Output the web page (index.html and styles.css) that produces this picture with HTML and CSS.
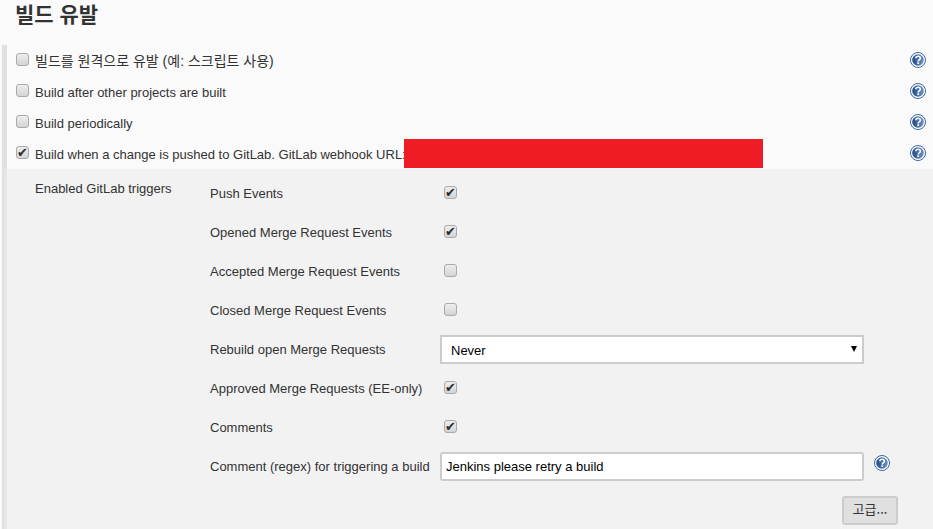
FILE: index.html
```html
<!DOCTYPE html>
<html lang="ko">
<head>
    <meta charset="UTF-8">
    <meta name="viewport" content="width=device-width, initial-scale=1.0">
    <title>빌드 유발</title>
    <link rel="stylesheet" href="styles.css">
</head>
<body>
    <svg class="defs" width="0" height="0" aria-hidden="true">
        <defs>
            <linearGradient id="help-fill" x1="0" y1="0" x2="1" y2="0">
                <stop offset="0" stop-color="#204a87"/>
                <stop offset="1" stop-color="#6f93c4"/>
            </linearGradient>
            <symbol id="help" viewBox="0 0 16 16">
                <circle cx="8" cy="8" r="7.5" fill="none" stroke="#3465a4" stroke-width="1"/>
                <circle cx="8" cy="8" r="6.6" fill="#fff"/>
                <circle cx="8" cy="8" r="5.8" fill="url(#help-fill)"/>
                <path d="M5.9 6.2c0-2.7 4.4-2.7 4.4 0 0 1.6-2.1 1.7-2.1 3.2" fill="none" stroke="#fff" stroke-width="1.6"/>
                <rect x="7.3" y="10.3" width="1.8" height="1.7" fill="#fff"/>
            </symbol>
        </defs>
    </svg>

    <h2 class="section-title">빌드 유발</h2>

    <div class="section">
        <div class="row">
            <label class="check check-ko"><input type="checkbox">빌드를 원격으로 유발 (예: 스크립트 사용)</label>
            <svg class="help"><use href="#help"/></svg>
        </div>
        <div class="row">
            <label class="check"><input type="checkbox">Build after other projects are built</label>
            <svg class="help"><use href="#help"/></svg>
        </div>
        <div class="row">
            <label class="check"><input type="checkbox">Build periodically</label>
            <svg class="help"><use href="#help"/></svg>
        </div>
        <div class="row">
            <label class="check"><input type="checkbox" checked>Build when a change is pushed to GitLab. GitLab webhook URL:</label>
            <div class="redacted"></div>
            <svg class="help"><use href="#help"/></svg>
        </div>

        <div class="panel">
            <div class="panel-title">Enabled GitLab triggers</div>
            <div class="triggers">
                <div class="trigger">
                    <div class="trigger-label">Push Events</div>
                    <input type="checkbox" checked>
                </div>
                <div class="trigger">
                    <div class="trigger-label">Opened Merge Request Events</div>
                    <input type="checkbox" checked>
                </div>
                <div class="trigger">
                    <div class="trigger-label">Accepted Merge Request Events</div>
                    <input type="checkbox">
                </div>
                <div class="trigger">
                    <div class="trigger-label">Closed Merge Request Events</div>
                    <input type="checkbox">
                </div>
                <div class="trigger">
                    <div class="trigger-label">Rebuild open Merge Requests</div>
                    <div class="select">Never<span class="arrow"></span></div>
                </div>
                <div class="trigger">
                    <div class="trigger-label">Approved Merge Requests (EE-only)</div>
                    <input type="checkbox" checked>
                </div>
                <div class="trigger">
                    <div class="trigger-label">Comments</div>
                    <input type="checkbox" checked>
                </div>
                <div class="trigger">
                    <div class="trigger-label">Comment (regex) for triggering a build</div>
                    <input class="text-input" type="text" value="Jenkins please retry a build">
                    <svg class="help help-inline"><use href="#help"/></svg>
                </div>
                <div class="actions">
                    <button class="advanced">고급...</button>
                </div>
            </div>
        </div>
    </div>
</body>
</html>
```

FILE: styles.css
```css
html, body {
    height: 100%;
}

body {
    margin: 0;
    overflow: hidden;
    background-color: #fafafa;
    color: #333;
    font-family: "Liberation Sans", "Noto Sans CJK KR", sans-serif;
    font-size: 13px;
}

.defs {
    position: absolute;
}

.section-title {
    margin: 0;
    padding-left: 15px;
    height: 45px;
    line-height: 30px;
    font-size: 21px;
    font-weight: bold;
}

.section {
    margin-left: 2px;
    border-left: 5px solid #e0e0e0;
    height: 484px;
}

.row {
    display: flex;
    align-items: center;
    height: 30px;
    margin-bottom: 1px;
    padding: 0 7px 0 9px;
}

.check {
    display: flex;
    align-items: center;
    padding-top: 2px;
}

.check-ko {
    font-size: 14px;
    padding-top: 0;
}

.check input[type="checkbox"] {
    margin: -3px 6px 0 0;
}

.check-ko input[type="checkbox"] {
    margin-top: -2px;
}

input[type="checkbox"] {
    appearance: none;
    position: relative;
    flex: none;
    width: 11px;
    height: 11px;
    margin: -2px 0 0;
    background: linear-gradient(#eee, #d4d4d4);
    border: 1px solid #aaa;
    border-radius: 3px;
    box-sizing: content-box;
}

input[type="checkbox"]:checked::after {
    content: "✔";
    position: absolute;
    left: 0;
    top: -1px;
    font: 13px/13px "DejaVu Sans", sans-serif;
    color: #2b2b2b;
}

.redacted {
    align-self: flex-end;
    width: 359px;
    height: 29px;
    margin-left: -2px;
    background-color: #ee1c25;
}

.help {
    flex: none;
    width: 16px;
    height: 16px;
    margin-left: auto;
}

.help-inline {
    margin: -8px 0 0 10px;
}

.panel {
    display: flex;
    background-color: #f2f2f2;
    height: 360px;
    margin-left: -3px;
    border-left: 3px solid #e6e6e6;
    padding-left: 28px;
}

.panel-title {
    width: 175px;
    flex: none;
    padding-top: 12px;
}

.triggers {
    padding-top: 5px;
}

.trigger {
    display: flex;
    align-items: center;
    height: 39px;
}

.trigger-label {
    width: 230px;
    flex: none;
}

.trigger input[type="checkbox"] {
    margin-left: 4px;
}

.select, .text-input {
    box-sizing: border-box;
    width: 424px;
    height: 29px;
    background-color: #fff;
    border: 2px solid #ccc;
    color: #000;
    font: 13px "Liberation Sans", sans-serif;
}

.select {
    display: flex;
    align-items: center;
    justify-content: space-between;
    padding: 1px 5px 0 9px;
}

.arrow {
    width: 0;
    height: 0;
    margin-top: -2px;
    border-left: 3px solid transparent;
    border-right: 3px solid transparent;
    border-top: 6px solid #000;
}

.text-input {
    padding: 0 4px;
    border-radius: 3px;
    outline: none;
}

.actions {
    display: flex;
    justify-content: flex-end;
    width: 688px;
    margin-top: 10px;
}

.advanced {
    width: 56px;
    height: 29px;
    padding: 0 0 5px;
    background-color: #e0e0e0;
    border: 2px solid #ccc;
    border-radius: 3px;
    color: #333;
    font: 13px "Noto Sans CJK KR", sans-serif;
}
```
